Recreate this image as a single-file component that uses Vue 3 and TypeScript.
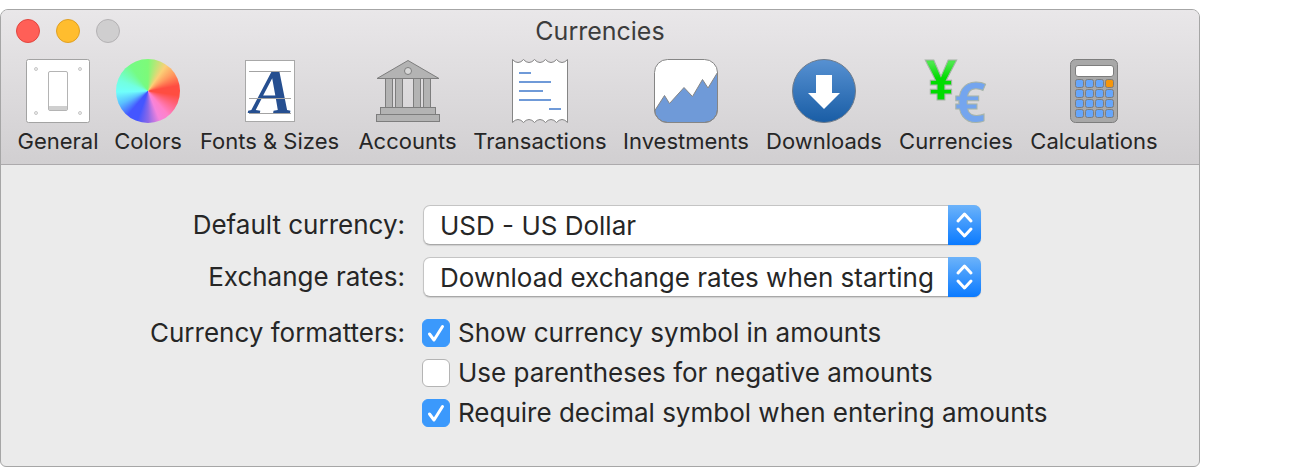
<script setup lang="ts">
import { ref } from 'vue'

interface Tab {
  id: string
  label: string
}

const tabs: Tab[] = [
  { id: 'general', label: 'General' },
  { id: 'colors', label: 'Colors' },
  { id: 'fonts', label: 'Fonts & Sizes' },
  { id: 'accounts', label: 'Accounts' },
  { id: 'transactions', label: 'Transactions' },
  { id: 'investments', label: 'Investments' },
  { id: 'downloads', label: 'Downloads' },
  { id: 'currencies', label: 'Currencies' },
  { id: 'calculations', label: 'Calculations' },
]

const screws: [number, number][] = [[10, 10], [54, 10], [10, 54], [54, 54]]
const columns: number[] = [9.5, 19.5, 37.5, 47.5]

const selected = ref<string>('currencies')
const currency = ref<string>('USD - US Dollar')
const rates = ref<string>('Download exchange rates when starting')

const formatters = ref([
  { id: 'symbol', label: 'Show currency symbol in amounts', on: true },
  { id: 'parens', label: 'Use parentheses for negative amounts', on: false },
  { id: 'decimal', label: 'Require decimal symbol when entering amounts', on: true },
])
</script>

<template>
  <main class="desktop">
    <section class="window">
      <header class="header">
        <div class="titlebar">
          <div class="lights">
            <button type="button" class="light close" aria-label="Close"></button>
            <button type="button" class="light minimize" aria-label="Minimize"></button>
            <button type="button" class="light zoom" aria-label="Zoom" disabled></button>
          </div>
          <h1 class="title">Currencies</h1>
        </div>
        <nav class="toolbar">
          <button
            v-for="tab in tabs"
            :key="tab.id"
            type="button"
            class="tab"
            :aria-pressed="selected === tab.id"
            @click="selected = tab.id"
          >
            <span v-if="tab.id === 'colors'" class="icon wheel"></span>
            <svg v-else class="icon" viewBox="0 0 64 64" aria-hidden="true">
              <g v-if="tab.id === 'general'">
                <rect x="0.5" y="0.5" width="63" height="63" rx="2" fill="#fff" stroke="#a3a3a3" />
                <circle v-for="(s, i) in screws" :key="i" :cx="s[0]" :cy="s[1]" r="1.5" fill="#eee" stroke="#c8c8c8" />
                <rect x="22.5" y="12.5" width="19" height="39" rx="1.5" fill="#fff" stroke="#b4b4b4" />
                <rect x="23" y="47" width="18" height="4" fill="#cfcfcf" />
              </g>
              <g v-else-if="tab.id === 'fonts'">
                <rect x="7.5" y="1.5" width="49" height="61" fill="#fff" stroke="#a8a8a8" />
                <text x="13" y="54" class="letter">A</text>
                <path d="M11 12.5H53M11 39.5H53M11 54.5H53" stroke="#a3a3a3" />
              </g>
              <g v-else-if="tab.id === 'accounts'" fill="#b3b3b3" stroke="#7d7d7d">
                <rect v-for="x in columns" :key="x" :x="x" y="19.5" width="7" height="29" />
                <path d="M32 1.5L63 19.5H1Z" />
                <circle cx="32" cy="12" r="3.5" fill="#d8d8d8" />
                <rect x="4.5" y="48.5" width="55" height="7" />
                <rect x="0.5" y="55.5" width="63" height="7" />
              </g>
              <g v-else-if="tab.id === 'transactions'">
                <path
                  d="M4.5.5Q7 3.5 10 3.5T15.5.5Q18 3.5 21 3.5T26.5.5Q29 3.5 32 3.5T37.5.5Q40 3.5 43 3.5T48.5.5Q51 3.5 54 3.5T59.5.5V63.5Q57 60.5 54 60.5T48.5 63.5Q46 60.5 43 60.5T37.5 63.5Q35 60.5 32 60.5T26.5 63.5Q24 60.5 21 60.5T15.5 63.5Q13 60.5 10 60.5T4.5 63.5Z"
                  fill="#fff"
                  stroke="#858585"
                />
                <path d="M11 14H23M11 23H43M11 32H35M11 41H43M41 50H53" stroke="#6f9ad8" stroke-width="2" />
              </g>
              <g v-else-if="tab.id === 'investments'">
                <rect x="0.5" y="0.5" width="63" height="63" rx="13" fill="#fff" />
                <path
                  d="M.5 52L10.5 36.5L15.5 44.5L30 28.5L38.5 37.5L48.5 20.5L54 29L63.5 13.5V50.5A13 13 0 0 1 50.5 63.5H13.5A13 13 0 0 1 .5 50.5Z"
                  fill="#6f9ad8"
                  stroke="#858585"
                />
                <rect x="0.5" y="0.5" width="63" height="63" rx="13" fill="none" stroke="#858585" />
              </g>
              <g v-else-if="tab.id === 'downloads'">
                <defs>
                  <linearGradient id="disc" x1="0" y1="0" x2="0" y2="1">
                    <stop offset="0" stop-color="#5791d2" />
                    <stop offset="1" stop-color="#195da5" />
                  </linearGradient>
                </defs>
                <circle cx="32" cy="32" r="31.5" fill="url(#disc)" stroke="#6e7b8b" />
                <path d="M24 16H40V34H48L32 50L16 34H24Z" fill="#fff" />
              </g>
              <g v-else-if="tab.id === 'currencies'" class="money">
                <defs>
                  <linearGradient id="yen" x1="0" y1="0" x2="0" y2="1">
                    <stop offset="0.3" stop-color="#4be84b" />
                    <stop offset="0.5" stop-color="#00dc00" />
                  </linearGradient>
                </defs>
                <text x="1" y="41" fill="url(#yen)">¥</text>
                <text x="30" y="63" fill="#74a5ee">€</text>
              </g>
              <g v-else stroke="#7d7d7d">
                <rect x="8.5" y="0.5" width="47" height="63" rx="5" fill="#a8a8a8" />
                <rect x="13.5" y="6.5" width="38" height="11" rx="2.5" fill="#fff" />
                <template v-for="r in 4" :key="r">
                  <rect
                    v-for="c in 4"
                    :key="c"
                    :x="3.5 + c * 10"
                    :y="10.5 + r * 10"
                    width="8"
                    height="8"
                    rx="2"
                    :fill="r === 1 && c === 4 ? '#f7960a' : '#66a6fb'"
                  />
                </template>
              </g>
            </svg>
            <span class="caption">{{ tab.label }}</span>
          </button>
        </nav>
      </header>

      <form class="form" @submit.prevent>
        <label class="name" for="currency">Default currency:</label>
        <div class="popup">
          <select id="currency" v-model="currency">
            <option>USD - US Dollar</option>
            <option>EUR - Euro</option>
          </select>
          <span class="stepper">
            <svg viewBox="0 0 33 40" aria-hidden="true"><path d="M10 16L16.5 9L23 16M10 24L16.5 31L23 24" /></svg>
          </span>
        </div>
        <label class="name" for="rates">Exchange rates:</label>
        <div class="popup">
          <select id="rates" v-model="rates">
            <option>Download exchange rates when starting</option>
            <option>Download exchange rates manually</option>
          </select>
          <span class="stepper">
            <svg viewBox="0 0 33 40" aria-hidden="true"><path d="M10 16L16.5 9L23 16M10 24L16.5 31L23 24" /></svg>
          </span>
        </div>
        <span id="formatters" class="name group-name">Currency formatters:</span>
        <div class="checks" role="group" aria-labelledby="formatters">
          <label v-for="f in formatters" :key="f.id" class="check">
            <span class="box">
              <input v-model="f.on" type="checkbox" />
              <svg v-if="f.on" viewBox="0 0 28 28" aria-hidden="true"><path d="M7.5 15L12 21L20.5 7.5" /></svg>
            </span>
            <span>{{ f.label }}</span>
          </label>
        </div>
      </form>
    </section>
  </main>
</template>

<style>
body {
  background: #fff;
}
</style>

<style scoped>
.desktop {
  padding: 9px 100px 8px 0;
  font-family: Inter, Roboto, "Liberation Sans", sans-serif;
  color: #262626;
}
.window {
  border: 1px solid #a6a6a6;
  border-radius: 8px 8px 6px 6px;
  background: #ebebeb;
  overflow: hidden;
}
.header {
  background: linear-gradient(#e9e7e9, #d1cfd1);
  border-bottom: 1px solid #acaaac;
}
.titlebar {
  display: grid;
  grid-template-columns: 1fr auto 1fr;
  align-items: center;
  height: 42px;
  padding: 0 15px;
}
.lights {
  display: flex;
  gap: 16px;
}
.light {
  width: 24px;
  height: 24px;
  padding: 0;
  border: 1px solid;
  border-radius: 50%;
}
.close {
  background: #ff5f57;
  border-color: #e2463f;
}
.minimize {
  background: #ffbd2e;
  border-color: #e0a023;
}
.zoom {
  background: #cfcecf;
  border-color: #b4b2b4;
}
.title {
  margin: 0;
  font-size: 25px;
  line-height: 32px;
  font-weight: 400;
  color: #3c3c3c;
}
.toolbar {
  display: grid;
  grid-template-columns: 98px 82px 161px 115px 150px 142px 134px 130px 146px;
  padding: 7px 8px 8px;
}
.tab {
  display: flex;
  flex-direction: column;
  align-items: center;
  gap: 3px;
  padding: 0;
  border: 0;
  background: none;
  font-family: inherit;
  font-size: 22px;
  line-height: 30px;
  color: #262626;
}
.caption {
  white-space: nowrap;
}
.icon {
  display: block;
  width: 64px;
  height: 64px;
  overflow: visible;
}
.wheel {
  border-radius: 50%;
  background: conic-gradient(
    #7dfa78 0deg,
    #fbd077 35deg,
    #ff9c60 55deg,
    #ff4d41 80deg,
    #ff4d41 98deg,
    #ff80c8 140deg,
    #f684dc 158deg,
    #8a68e8 180deg,
    #4456ff 200deg,
    #4456ff 220deg,
    #5ac0ff 245deg,
    #70fffb 268deg,
    #72ffe0 290deg,
    #75fb85 325deg,
    #7dfa78 360deg
  );
}
.letter {
  font-family: "Liberation Serif", serif;
  font-size: 63px;
  font-weight: 700;
  font-style: italic;
  fill: #264f90;
}
.money {
  font-family: "Open Sans", sans-serif;
  font-size: 56px;
  font-weight: 700;
  stroke: #a8b4a8;
  stroke-width: 1px;
}
.form {
  display: grid;
  grid-template-columns: 404px minmax(0, 1fr);
  column-gap: 18px;
  row-gap: 12px;
  padding: 40px 100px 33px 0;
  font-size: 26px;
  line-height: 40px;
}
.name {
  text-align: right;
  white-space: nowrap;
}
.popup {
  display: grid;
  grid-template-columns: minmax(0, 1fr) 33px;
  max-width: 558px;
  height: 40px;
}
.popup select {
  grid-area: 1 / 1 / 2 / 3;
  width: 100%;
  height: 40px;
  padding: 0 40px 0 16px;
  appearance: none;
  border: 1px solid #c4c4c4;
  border-bottom-color: #a8a8a8;
  border-radius: 7px;
  background: #fff;
  box-shadow: 0 1px 1px #00000020;
  font: inherit;
  color: inherit;
}
.stepper {
  grid-area: 1 / 2 / 2 / 3;
  z-index: 1;
  height: 40px;
  border-radius: 0 7px 7px 0;
  background: linear-gradient(#6cb3fa, #0a7aff);
  pointer-events: none;
}
.stepper svg,
.box svg {
  display: block;
  fill: none;
  stroke: #fff;
  stroke-width: 3px;
  stroke-linecap: round;
  stroke-linejoin: round;
}
.checks {
  display: flex;
  flex-direction: column;
  align-items: flex-start;
  padding-top: 4px;
}
.group-name {
  padding-top: 4px;
}
.check {
  display: flex;
  align-items: center;
  gap: 8px;
  height: 40px;
  margin-left: -1px;
  white-space: nowrap;
}
.box {
  display: grid;
  width: 28px;
  height: 28px;
}
.box input {
  grid-area: 1 / 1;
  width: 28px;
  height: 28px;
  margin: 0;
  appearance: none;
  border: 1px solid #b4b4b4;
  border-radius: 6px;
  background: #fff;
}
.box input:checked {
  border-color: #3b99fc;
  background: #3b99fc;
}
.box svg {
  grid-area: 1 / 1;
  z-index: 1;
  width: 28px;
  height: 28px;
  pointer-events: none;
}
</style>
